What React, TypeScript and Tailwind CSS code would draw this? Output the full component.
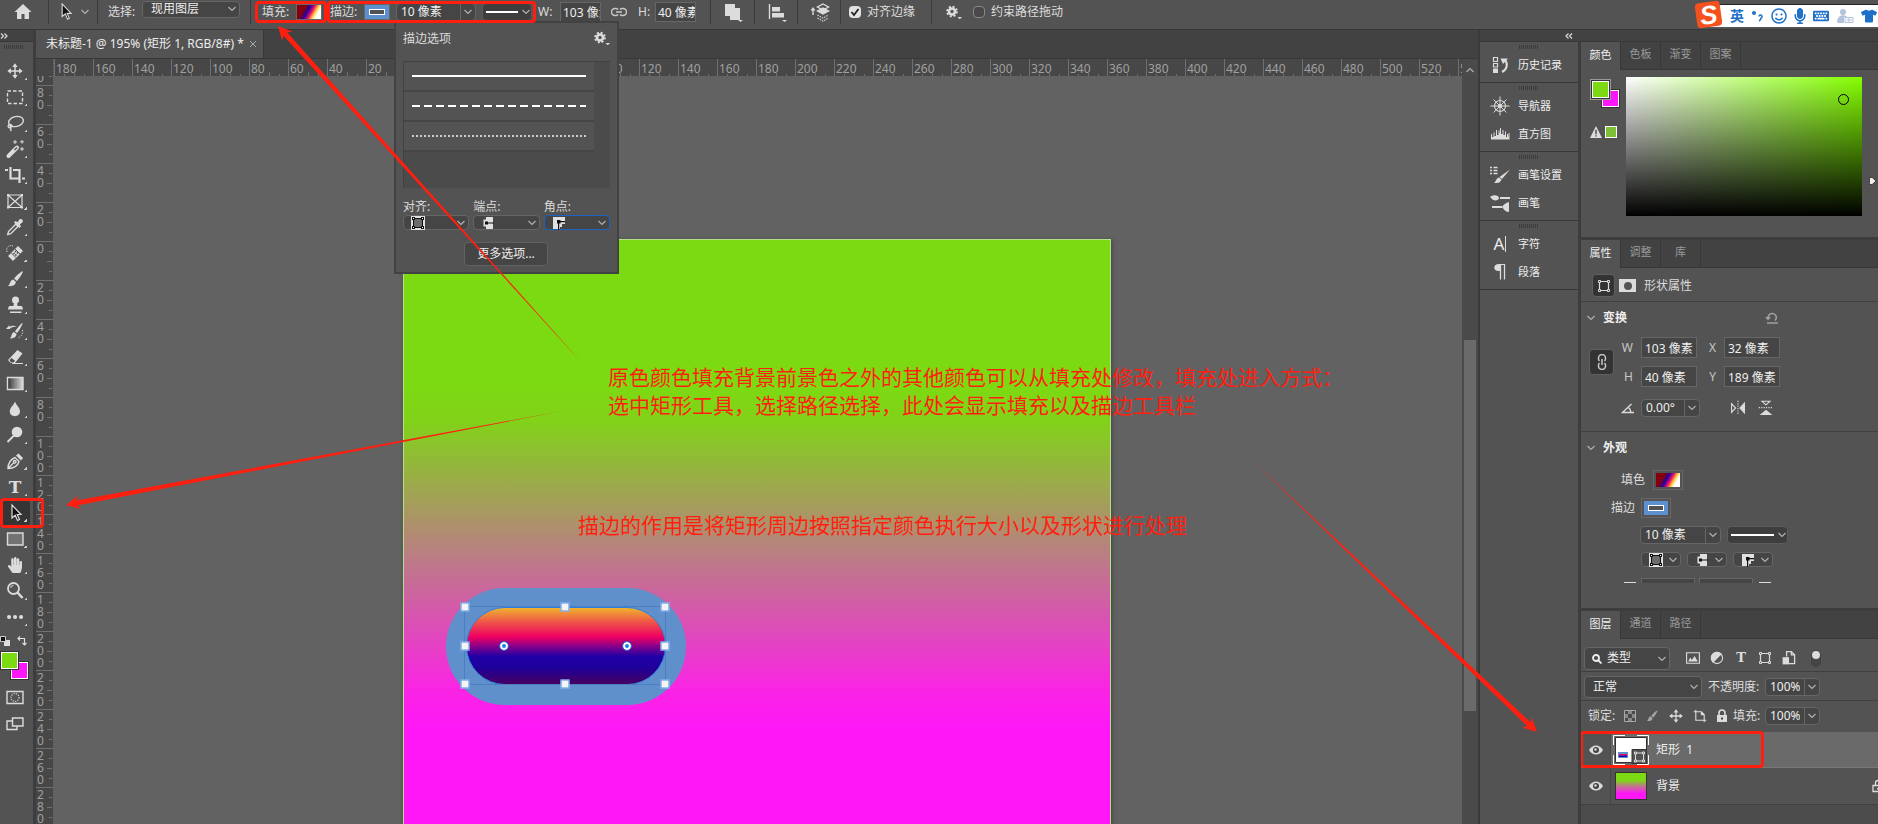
import { useState, type ReactNode } from "react"
import { FaHandPaper, FaKeyboard, FaMicrophone, FaTshirt, FaRegSmile } from "react-icons/fa"

const topMarks = Array.from({ length: 37 }, (_, i) => Math.abs(-180 + i * 20))
const sideMarks = Array.from({ length: 21 }, (_, i) => Math.abs(-100 + i * 20))

function Chevron({ className = "" }: { className?: string }) {
  return (
    <svg viewBox="0 0 8 6" className={`h-1.5 w-2 shrink-0 text-[#b0b0b0] ${className}`}>
      <path d="M0.5 1L4 4.5L7.5 1" fill="none" stroke="currentColor" strokeWidth="1.2" />
    </svg>
  )
}

function Icon({ size = "h-5 w-5", children }: { size?: string; children: ReactNode }) {
  return (
    <svg viewBox="0 0 20 20" className={`${size} shrink-0`} fill="none" stroke="#dcdcdc" strokeWidth="1.4">
      {children}
    </svg>
  )
}

function Gear() {
  return (
    <svg viewBox="0 0 16 16" className="h-4 w-4 shrink-0" fill="none" stroke="#dcdcdc">
      <circle cx="6" cy="7.500" r="3" strokeWidth="2.600" />
      <circle cx="6" cy="7.500" r="4.800" strokeWidth="2" strokeDasharray="2 1.770" />
      <path d="M11.500 13h4.500l-2.250 2.300z" fill="#dcdcdc" stroke="none" />
    </svg>
  )
}

function Grip() {
  return <div className="h-1 w-5 bg-[repeating-linear-gradient(90deg,#3c3c3c_0_1px,transparent_1px_2px)]" />
}

function GradientSwatch() {
  return (
    <span className="block h-3.5 w-6 bg-[linear-gradient(120deg,#84000f_30%,#1e00a0_44%,#f0106a_58%,#ffd23c_70%,#fff_80%)]" />
  )
}

function StrokeSwatch() {
  return (
    <span className="flex h-3.5 w-6 items-center justify-center bg-[#5d90ce]">
      <span className="h-1.5 w-4 border border-white bg-[#535353]" />
    </span>
  )
}

function TransformIcon({ size = "h-4 w-4" }: { size?: string }) {
  return (
    <svg viewBox="0 0 16 16" className={`${size} shrink-0`} fill="none" stroke="#dcdcdc">
      <path d="M5 3.500h6M5 12.500h6M3.500 5v6M12.500 5v6" strokeWidth="1.200" />
      <path d="M2.500 2.500h2v2h-2zM11.500 2.500h2v2h-2zM2.500 11.500h2v2h-2zM11.500 11.500h2v2h-2z" />
    </svg>
  )
}

function MoveIcon({ size = "h-5 w-5" }: { size?: string }) {
  return (
    <Icon size={size}>
      <path d="M10 4v12M4 10h12" strokeWidth="1.6" />
      <path d="M10 1.5l3 4H7zM10 18.5l3-4H7zM1.5 10l4-3v6zM18.5 10l-4-3v6z" fill="#dcdcdc" stroke="none" />
    </Icon>
  )
}

function BrushIcon({ size = "h-5 w-5" }: { size?: string }) {
  return (
    <Icon size={size}>
      <path d="M17.8 2.2c.8.5-4.4 8.6-6 9.8L9 9.6C10.200 7.800 16.600 1.600 17.800 2.200z" fill="#dcdcdc" stroke="none" />
      <path d="M8.200 10.400l2.600 2.300c.1 3-3 5-8 4.300 2.600-1 1.600-5.800 5.400-6.600z" fill="#dcdcdc" stroke="none" />
    </Icon>
  )
}

function AlignGlyph() {
  return (
    <svg viewBox="0 0 14 14" className="h-3.5 w-3.5">
      <path d="M0 0h14v14H0z" fill="#e0e0e0" />
      <path d="M2.500 2.500h9v9h-9z" fill="#6b6b6b" stroke="#111" />
      <path d="M1 1h3v3H1zM10 1h3v3h-3zM1 10h3v3H1zM10 10h3v3h-3z" fill="#111" />
      <path d="M2 2h1v1H2zM11 2h1v1h-1zM2 11h1v1H2zM11 11h1v1h-1z" fill="#fff" />
    </svg>
  )
}

function CapGlyph() {
  return (
    <svg viewBox="0 0 14 14" className="h-3.5 w-3.5">
      <path d="M5 1h7v12H5v-2.500H2.500v-7H5z" fill="#e0e0e0" />
      <path d="M4 5.500h3v3H4zM7 6.500h6v1H7z" fill="#111" />
    </svg>
  )
}

function CornerGlyph() {
  return (
    <svg viewBox="0 0 14 14" className="h-3.5 w-3.5">
      <path d="M1 1h12v7h-3v3H8v2H1z" fill="#e0e0e0" />
      <path d="M5 4h3.500v3.500H5zM8 5h5v1.200H8zM6 7h1.200v7H6z" fill="#111" />
    </svg>
  )
}

function IconSelect({ id, className, focus, children }: { id: string; className: string; focus?: boolean; children: ReactNode }) {
  return (
    <div className={`relative ${className}`}>
      <select
        id={id}
        aria-label={id}
        className={`block h-[15px] w-full appearance-none rounded-sm border bg-[#454545] ${focus ? "border-[#1b62c4]" : "border-[#666]"}`}
      >
        <option value="default" aria-label={id} />
      </select>
      <span className="pointer-events-none absolute inset-y-0 left-2 flex items-center">{children}</span>
      <Chevron className="pointer-events-none absolute top-[5px] right-1" />
    </div>
  )
}

function Combo({ id, value, width }: { id: string; value: string; width: string }) {
  return (
    <div className={`flex h-[18px] rounded-sm border border-[#666] bg-[#454545] ${width}`}>
      <input id={id} aria-label={id} defaultValue={value} className="w-full min-w-0 px-1 text-[12px] leading-4 text-[#eee] outline-none" />
      <button aria-label={`${id} 菜单`} className="flex w-[15px] shrink-0 items-center justify-center border-l border-[#666]">
        <Chevron />
      </button>
    </div>
  )
}

function LineSelect({ id, className }: { id: string; className: string }) {
  return (
    <div className={`relative ${className}`}>
      <select id={id} aria-label={id} className="block h-[18px] w-full appearance-none rounded-sm border border-[#5c5c5c] bg-[#3e3e3e]">
        <option value="solid" aria-label="实线" />
      </select>
      <span className="pointer-events-none absolute inset-0 flex items-center pr-0.5 pl-1">
        <span className="h-0.5 flex-1 bg-white" />
        <Chevron className="ml-1" />
      </span>
    </div>
  )
}

function RedBox({ className = "inset-0" }: { className?: string }) {
  return <span className={`pointer-events-none absolute z-20 rounded-sm border-3 border-[#ff1f10] ${className}`} />
}

function LinkIcon({ className = "" }: { className?: string }) {
  return (
    <svg viewBox="0 0 16 10" className={`h-2.5 w-4 shrink-0 ${className}`} fill="none" stroke="#c8c8c8" strokeWidth="1.5">
      <path d="M7 2.500A3 3 0 0 0 4.500 1.500h-.5a3.500 3.500 0 0 0 0 7h.5A3 3 0 0 0 7 7.500M9 2.500a3 3 0 0 1 2.500-1h.5a3.500 3.500 0 0 1 0 7h-.5A3 3 0 0 1 9 7.500M5 5h6" />
    </svg>
  )
}

const tools: { name: string; icon: ReactNode }[] = [
  { name: "移动", icon: <MoveIcon size="h-[18px] w-[18px]" /> },
  { name: "矩形选框", icon: <Icon><path d="M2.500 4h15v12.500h-15z" strokeDasharray="3.500 2" /></Icon> },
  {
    name: "套索",
    icon: (
      <Icon>
        <ellipse cx="11" cy="8.500" rx="7.500" ry="5" transform="rotate(-12 11 8.500)" />
        <path d="M5 11.500c-3 .5-2 4 .5 3s1.500-3-.5-3c0 3 2 4 .5 6.500" />
      </Icon>
    ),
  },
  {
    name: "魔棒",
    icon: (
      <Icon>
        <path d="M3.500 17L12 8.500" strokeWidth="4" strokeLinecap="round" />
        <path d="M9.500 11l2.500-2.500" stroke="#535353" strokeWidth="1.500" />
        <path d="M10 1v4M8 3h4M17 1v3.600M15.200 2.800h3.600M17 8v4M15 10h4" strokeWidth="1" />
      </Icon>
    ),
  },
  { name: "裁剪", icon: <Icon><path d="M5.500 2v11.500H15M0 5h3M8 5h6.500v10.500M14.500 14v4M17 13.500h3" strokeWidth="2.200" /></Icon> },
  { name: "图框", icon: <Icon><path d="M3 4h14v12.500H3zM3 4l14 12.500M17 4L3 16.500" strokeWidth="1.200" /><path d="M2 3h2v2H2zM16 3h2v2h-2zM2 15.500h2v2H2zM16 15.500h2v2h-2z" fill="#dcdcdc" stroke="none" /></Icon> },
  {
    name: "吸管",
    icon: (
      <Icon>
        <path d="M11 7L3.500 14.500l-.8 3 3-.8L13 9.500z" />
        <path d="M9 5.500l1.500-1.500 2 1.200 2-2.600c1.500-1.600 4.500.8 3 2.700L14.800 7.500l1.200 2-1.500 1.500z" fill="#dcdcdc" stroke="none" />
      </Icon>
    ),
  },
  {
    name: "修复",
    icon: (
      <Icon>
        <path d="M5.500 15.500L15.500 5.500" strokeWidth="7" />
        <path d="M6.200 9.800l5 5M10 6l5 5" stroke="#535353" strokeWidth="1" />
        <path d="M10.500 8.500h.1M12.500 10h.1M9 10.500h.1M10.800 12h.1" stroke="#444" strokeWidth="1.400" strokeLinecap="square" />
        <path d="M2 9c-1.500-5 3-8 7-5.500" strokeDasharray="1.200 1.200" strokeWidth="1" />
      </Icon>
    ),
  },
  { name: "画笔", icon: <BrushIcon /> },
  {
    name: "图章",
    icon: (
      <Icon>
        <circle cx="10.500" cy="5" r="3.500" fill="#dcdcdc" stroke="none" />
        <path d="M9 7h3l.5 4h4c1 0 1.500 3.500 1.500 3.500H3S3.500 11 4.500 11h4zM5 16.500h11.500V18H5z" fill="#dcdcdc" stroke="none" />
      </Icon>
    ),
  },
  {
    name: "历史画笔",
    icon: (
      <Icon>
        <path d="M17.500 2c.8.500-4 9-5.500 10L10 10.500C11 9 16.500 1.500 17.500 2zM9 11l2.500 2c0 3-3 4.500-6.500 4.500 2-1.500 1-5.500 4-6.500zM1 8l3.500-4v2c2-1.500 5-1.500 7-.5-2 .3-5 .5-7 2.500z" fill="#dcdcdc" stroke="none" />
        <path d="M17.500 9c1 4-2 7.500-5 8" strokeWidth="1" strokeDasharray="1.200 1.500" />
      </Icon>
    ),
  },
  {
    name: "橡皮擦",
    icon: (
      <Icon>
        <path d="M12.500 3l5 3.500-7.500 9.500H5.500L3 13z" fill="#dcdcdc" stroke="none" />
        <path d="M6.800 10.800l4 3M7 16.500h11" stroke="#dcdcdc" strokeWidth="1.200" />
        <path d="M6.500 11l3.500 2.700-1.500 1.800H6L4.500 13z" fill="#535353" stroke="none" />
      </Icon>
    ),
  },
  {
    name: "渐变",
    icon: (
      <Icon>
        <defs>
          <linearGradient id="tool-gradient"><stop stopColor="#333" /><stop offset="1" stopColor="#ddd" /></linearGradient>
        </defs>
        <path d="M2.500 4.500h15.500v12H2.500z" fill="url(#tool-gradient)" />
      </Icon>
    ),
  },
  { name: "模糊", icon: <Icon><path d="M10 2.500c1 3.500 5 6 5 9.800 0 6.500-10.200 6.500-10.200 0C4.800 8.500 9 6 10 2.500z" fill="#dcdcdc" stroke="none" /></Icon> },
  { name: "减淡", icon: <Icon><circle cx="12" cy="7" r="5.300" fill="#dcdcdc" stroke="none" /><path d="M9 10.500L2.500 17" strokeWidth="1.800" /></Icon> },
  {
    name: "钢笔",
    icon: (
      <Icon>
        <path d="M3 17.500c0-5 1.500-8.500 7-11l4 4c-1.500 5-5.500 7-11 7zl6-6" />
        <circle cx="9.700" cy="10.800" r="1.300" />
        <path d="M11 4.500l2.500-2 4.500 4.500-2 2.500z" fill="#dcdcdc" stroke="none" />
      </Icon>
    ),
  },
  { name: "文字", icon: <span className="font-['DejaVu_Serif',serif] text-[17px] leading-5 font-bold">T</span> },
  { name: "路径选择", icon: <Icon><path d="M7 2v13l3.200-2.800 2.300 5.300 2-1-2.300-5H16z" fill="#111" strokeWidth="1.200" /></Icon> },
  { name: "矩形", icon: <Icon><path d="M2.500 4h15.500v12H2.500z" fill="#727272" /></Icon> },
  { name: "抓手", icon: <FaHandPaper className="h-4 w-4" /> },
  { name: "缩放", icon: <Icon><circle cx="8.500" cy="7.500" r="5.500" strokeWidth="1.800" /><path d="M5.500 7a3 3 0 0 1 3-2.500" strokeWidth="1" /><path d="M12.500 11.500l5 5.500" strokeWidth="2.500" /></Icon> },
  { name: "更多", icon: <Icon><path d="M4 10h.1M10 10h.1M16 10h.1" strokeWidth="4" strokeLinecap="round" /></Icon> },
]

function Toolbar() {
  const [active, setActive] = useState("路径选择")

  return (
    <aside className="flex w-9 shrink-0 flex-col border-r-3 border-[#3d3d3d] bg-[#535353]">
      <div className="flex h-3 items-center border-b border-[#383838] bg-[#424242]">
        <svg viewBox="0 0 8 6" className="h-1.5 w-2" fill="none" stroke="#ddd" strokeWidth="1.2">
          <path d="M1 .5L3.500 3L1 5.500M4.500 .5L7 3L4.500 5.500" />
        </svg>
      </div>
      <div className="flex h-4 justify-start pt-[3px] pl-1"><Grip /></div>
      {tools.map((t) => (
        <div key={t.name} className="relative h-[26px]">
          <button
            aria-label={t.name}
            onClick={() => setActive(t.name)}
            className={`flex h-[26px] w-[30px] items-center justify-center rounded-sm text-[#dcdcdc] ${active === t.name ? "bg-[#353535]" : ""}`}
          >
            {t.icon}
          </button>
          <span className="absolute right-1.5 bottom-1 h-[3px] w-[3px] bg-[linear-gradient(135deg,transparent_50%,#ccc_50%)]" />
          {active === t.name && <RedBox className="-top-0.5 -bottom-0.5 left-0 w-11" />}
        </div>
      ))}
      <div className="flex h-[21px] items-center justify-between pr-1.5">
        <svg viewBox="0 0 10 10" className="h-2.5 w-2.5"><path d="M4 4h6v6H4z" fill="#ddd" /><path d="M.5.5h5v5h-5z" fill="#111" stroke="#ccc" /></svg>
        <svg viewBox="0 0 10 10" className="h-2.5 w-2.5" fill="none" stroke="#ddd" strokeWidth="1.2"><path d="M3 .5L1 2.500L3 4.500M1 2.500h6.500V9M5.500 7l2 2 2-2" /></svg>
      </div>
      <div className="relative h-[30px]">
        <span className="absolute top-2.5 left-2.5 h-[19px] w-[19px] border border-[#333] bg-white p-px"><span className="block h-full bg-[#ff17fb]" /></span>
        <span className="absolute top-0 left-0 h-[19px] w-[19px] border border-[#333] bg-white p-px"><span className="block h-full bg-[#7cda12]" /></span>
      </div>
      <div className="flex h-8 w-[30px] items-center justify-center">
        <Icon><path d="M2 4.500h16v12H2z" /><circle cx="10" cy="10.500" r="4" strokeDasharray="1.200 1.200" strokeWidth="1.200" /></Icon>
      </div>
      <div className="relative flex h-5 w-[30px] items-center justify-center">
        <Icon><path d="M2 8h10v8.500H2z" /><path d="M7.500 5h10.500v8H7.500z" fill="#535353" /></Icon>
      </div>
    </aside>
  )
}

function OptionsBar() {
  return (
    <header className="relative flex h-[30px] shrink-0 items-start overflow-hidden border-b border-[#383838] bg-[#535353] text-[12px]">
      <button aria-label="主页" className="flex h-6 w-[49px] shrink-0 items-center justify-center border-r border-[#3c3c3c] pr-0.5">
        <svg viewBox="0 0 18 16" className="h-4 w-[18px]" fill="#dcdcdc"><path d="M9 0l8.500 8H15v7h-4.500v-5h-3v5H3V8H.5z" /></svg>
      </button>
      <button aria-label="路径选择工具" className="flex h-6 w-[49px] shrink-0 items-center gap-1 border-r border-[#3c3c3c] pl-2.5">
        <Icon size="h-[18px] w-[18px]"><path d="M3.500 1v14l3.500-3 2.500 6 2-1-2.500-5.500h4.500z" fill="#111" strokeWidth="1.200" /></Icon>
        <Chevron />
      </button>
      <div className="flex h-6 w-[153px] shrink-0 items-center gap-1 border-r border-[#3c3c3c] pl-2.5">
        <label htmlFor="pick" className="w-[30px] whitespace-nowrap">选择:</label>
        <div className="relative mb-1.5">
          <select id="pick" className="h-[17px] w-[98px] appearance-none rounded-sm border border-[#666] bg-[#454545] pl-2 text-[12px] leading-[14px] text-[#eee]">
            <option>现用图层</option>
          </select>
          <Chevron className="pointer-events-none absolute top-1.5 right-1" />
        </div>
      </div>
      <div className="relative mt-px ml-1 flex h-[22px] w-[72px] shrink-0 items-center gap-1.5 pl-[7px]">
        <span className="w-7 whitespace-nowrap">填充:</span>
        <button aria-label="填充" className="border border-[#666]"><GradientSwatch /></button>
        <RedBox />
      </div>
      <div className="relative mt-px flex h-[22px] w-[209px] shrink-0 items-center gap-1.5 pl-[3px]">
        <span className="w-7 whitespace-nowrap">描边:</span>
        <button aria-label="描边" className="border border-[#666]"><StrokeSwatch /></button>
        <Combo id="描边宽度" value="10 像素" width="w-20" />
        <LineSelect id="描边类型" className="w-[50px]" />
        <RedBox />
      </div>
      <div className="flex h-6 shrink-0 items-center">
        <label htmlFor="bar-w" className="w-6 pl-0.5">W:</label>
        <input id="bar-w" defaultValue="103 像素" className="h-5 w-[41px] border border-[#666] bg-[#454545] pl-0.5 text-[#eee]" />
        <LinkIcon className="ml-2.5" />
        <label htmlFor="bar-h" className="w-7 pl-[11px]">H:</label>
        <input id="bar-h" defaultValue="40 像素" className="h-5 w-[41px] border border-[#666] bg-[#454545] pl-0.5 text-[#eee]" />
      </div>
      <div className="ml-3.5 flex h-6 shrink-0 items-center border-l border-[#3c3c3c] pl-3">
        <button aria-label="路径操作" className="flex w-[31px] items-center">
          <Icon><path d="M2 2h10v4h5v12H7v-4H2z" fill="#dcdcdc" stroke="none" /><path d="M15 18h5l-2.500 2z" fill="#dcdcdc" stroke="none" /></Icon>
        </button>
        <button aria-label="路径对齐方式" className="flex h-6 w-[43px] items-center border-l border-[#3c3c3c] pl-3">
          <Icon><path d="M2.500 2v15" /><path d="M5 5h8v4.500H5zM5 11h12v4.500H5z" fill="#dcdcdc" stroke="none" /><path d="M15 18h5l-2.500 2z" fill="#dcdcdc" stroke="none" /></Icon>
        </button>
        <button aria-label="路径排列方式" className="flex h-6 w-[43px] items-center border-l border-[#3c3c3c] pl-3">
          <Icon>
            <path d="M3 13V7" /><path d="M3 5l2.500 3.500h-5z" fill="#dcdcdc" stroke="none" />
            <path d="M13 2l5.500 3L13 8 7.500 5z" />
            <path d="M13 6l5.500 3-5.500 3-5.500-3z" fill="#dcdcdc" />
            <path d="M7.500 13l5.500 3 5.500-3M7.500 16l5.500 3 5.500-3" strokeWidth="1.100" strokeDasharray="1.500 1" />
          </Icon>
        </button>
        <label className="flex h-6 w-[91px] items-center gap-1.5 border-l border-[#3c3c3c] pl-2">
          <span className="relative h-3 w-3">
            <input type="checkbox" defaultChecked className="peer block h-3 w-3 appearance-none rounded-sm bg-[#e2e2e2]" />
            <svg viewBox="0 0 12 12" className="pointer-events-none absolute inset-0 hidden peer-checked:block"><path d="M2.500 6l2.500 3 4.500-6" fill="none" stroke="#222" strokeWidth="1.800" /></svg>
          </span>
          对齐边缘
        </label>
        <button aria-label="设置" className="flex h-6 w-[42px] items-center border-l border-[#3c3c3c] pl-3.5"><Gear /></button>
        <label className="flex items-center gap-1.5 whitespace-nowrap">
          <input type="checkbox" className="h-3 w-3 appearance-none rounded-sm border border-[#888] bg-[#494949]" />
          约束路径拖动
        </label>
      </div>
      <ImeBar />
    </header>
  )
}

function ImeBar() {
  return (
    <div className="absolute top-1 right-0 flex h-[23px] w-[168px] items-center justify-between border-t border-[#222] bg-white pr-px pl-5 text-[#1f70c8]">
      <span className="absolute -top-[3px] -left-3.5 flex h-[25px] w-[25px] -rotate-8 items-center justify-center rounded-sm bg-[#f4511e] font-['Liberation_Sans',sans-serif] text-[26px] leading-6 font-bold text-white italic">
        S
      </span>
      <span className="text-[14px] leading-5 font-bold">英</span>
      <svg viewBox="0 0 12 12" className="h-3 w-3"><circle cx="3" cy="3" r="2" fill="currentColor" /><path d="M8 6.500a1.500 1.500 0 1 1 2 1.500q0 2-2 3" fill="none" stroke="currentColor" strokeWidth="1.500" /></svg>
      <FaRegSmile className="h-4 w-4" />
      <FaMicrophone className="h-4 w-3" />
      <FaKeyboard className="h-4 w-4" />
      <svg viewBox="0 0 17 16" className="h-4 w-[17px]" fill="#b3c3dc"><circle cx="6" cy="4" r="3" /><path d="M0 14c0-8 9-8 10-5H7v6H1z" /><path d="M8 9.500h8v5H8zM12 9.500v5M9.500 12H15" fill="#fff" stroke="#b3c3dc" /></svg>
      <FaTshirt className="h-4 w-4" />
    </div>
  )
}

function StrokeOptions() {
  return (
    <div className="absolute top-[21px] left-[394px] z-10 h-[253px] w-[225px] border-2 border-[#424242] bg-[#535353] px-[7px] text-[12px]">
      <div className="flex h-[38px] items-start justify-between pt-[7px]">
        <h2>描边选项</h2>
        <button aria-label="描边选项菜单"><Gear /></button>
      </div>
      <div className="h-[127px] border-t border-l border-[#424242] bg-[#4b4b4b] pr-4">
        <button aria-label="实线" className="flex h-[30px] w-full items-center border-b-2 border-[#454545] bg-[#535353] px-2">
          <span className="h-0.5 w-full bg-white" />
        </button>
        <button aria-label="虚线" className="flex h-[30px] w-full items-center border-b-2 border-[#454545] bg-[#535353] px-2">
          <span className="h-0.5 w-full bg-[repeating-linear-gradient(90deg,#fff_0_8px,transparent_8px_12px)]" />
        </button>
        <button aria-label="点线" className="flex h-[30px] w-full items-center border-b-2 border-[#454545] bg-[#535353] px-2">
          <span className="h-0.5 w-full bg-[repeating-linear-gradient(90deg,#ccc_0_2px,transparent_2px_4px)]" />
        </button>
      </div>
      <div className="mt-2.5 grid grid-cols-3 gap-x-1 leading-[17px]">
        <label htmlFor="对齐">对齐:</label>
        <label htmlFor="端点">端点:</label>
        <label htmlFor="角点">角点:</label>
        <IconSelect id="对齐" className="w-full"><AlignGlyph /></IconSelect>
        <IconSelect id="端点" className="w-full"><CapGlyph /></IconSelect>
        <IconSelect id="角点" className="w-full" focus><CornerGlyph /></IconSelect>
      </div>
      <button className="mt-3 ml-[61px] block h-6 w-[84px] rounded-sm border border-[#626262] bg-[#454545] leading-5 text-[#eee]">更多选项...</button>
    </div>
  )
}

function Handle({ className }: { className: string }) {
  return <span className={`absolute h-[9px] w-[9px] -translate-x-1/2 -translate-y-1/2 border border-[#4d8ce6] bg-[#f4f4f4] ${className}`} />
}

function Canvas() {
  return (
    <div className="relative flex-1 overflow-hidden bg-[#626262]">
      <div className="absolute top-[163px] left-[350px] h-[1000px] w-[708px] border border-[#b5e08a] bg-[linear-gradient(to_bottom,#7cda12_0,#7cda12_145px,#81d219_181px,#bd7a88_321px,#fa24e4_450px,#ff17f8_490px)] shadow-[1px_1px_4px_#444]">
        <div className="absolute top-[348px] left-[42px] h-[117px] w-60 rounded-full bg-[#5f90cc]">
          <div className="absolute inset-x-5 top-[19px] bottom-5 rounded-full border border-[#2d7fe0] bg-[linear-gradient(to_bottom,#f0b22f,#ee4e4a_20%,#f00062_38%,#8a0089_50%,#1f00a6_64%,#1e009c_78%,#440060)]" />
          <div className="absolute top-[18px] right-5 bottom-5 left-[18px] border border-[#4b7fc0]">
            <Handle className="top-0 left-0" />
            <Handle className="top-0 left-1/2" />
            <Handle className="top-0 left-full" />
            <Handle className="top-1/2 left-0" />
            <Handle className="top-1/2 left-full" />
            <Handle className="top-full left-0" />
            <Handle className="top-full left-1/2" />
            <Handle className="top-full left-full" />
            <span className="absolute top-[35px] left-[35px] h-2 w-2 rounded-full border-2 border-white bg-[#1f7fe8] outline outline-[#1f6fd0]" />
            <span className="absolute top-[35px] right-[34px] h-2 w-2 rounded-full border-2 border-white bg-[#1f7fe8] outline outline-[#1f6fd0]" />
          </div>
        </div>
      </div>
    </div>
  )
}

function Workspace() {
  return (
    <main className="flex min-w-0 flex-1 flex-col">
      <div className="flex h-[29px] shrink-0 border-b border-[#383838] bg-[#424242] text-[12px]">
        <div className="flex w-[228px] items-center gap-1.5 border-r border-[#383838] bg-[#535353] pl-2.5 text-[#eee]">
          <span className="whitespace-nowrap">未标题-1 @ 195% (矩形 1, RGB/8#) *</span>
          <button aria-label="关闭" className="text-[#aaa]">
            <svg viewBox="0 0 6 6" className="h-1.5 w-1.5"><path d="M0 0l6 6M6 0L0 6" stroke="currentColor" /></svg>
          </button>
        </div>
      </div>
      <div className="flex min-h-0 flex-1">
        <div className="flex min-w-0 flex-1 flex-col">
          <div className="flex h-[17px] shrink-0 overflow-hidden bg-[#474747] text-[12px] leading-5 text-[#a0a0a0]">
            <div className="w-[18px] shrink-0 border-r border-dotted border-[#707070]" />
            {topMarks.map((m, i) => (
              <div key={i} className="relative w-[39px] shrink-0 border-l border-[#707070] pl-px">
                {m}
                <span className="absolute top-[15px] left-[9px] h-0.5 w-px bg-[#707070]" />
                <span className="absolute top-[13px] left-[19px] h-1 w-px bg-[#707070]" />
                <span className="absolute top-[15px] left-[29px] h-0.5 w-px bg-[#707070]" />
              </div>
            ))}
          </div>
          <div className="flex min-h-0 flex-1">
            <div className="w-[17px] shrink-0 overflow-hidden bg-[#474747] text-[12px] text-[#a0a0a0]">
              <div className="-mt-[30px]">
                {sideMarks.map((m, i) => (
                  <div key={i} className="relative flex h-[39px] flex-col border-t border-[#707070] pt-px pl-px leading-3">
                    {String(m).split("").map((d, j) => (
                      <span key={j}>{d}</span>
                    ))}
                    <span className="absolute top-[9px] right-px h-px w-[3px] bg-[#707070]" />
                    <span className="absolute top-[19px] right-px h-px w-[5px] bg-[#707070]" />
                    <span className="absolute top-[29px] right-px h-px w-[3px] bg-[#707070]" />
                  </div>
                ))}
              </div>
            </div>
            <Canvas />
          </div>
        </div>
        <div className="w-4 shrink-0 bg-[#4a4a4a] px-0.5">
          <Chevron className="mx-auto mt-2 rotate-180" />
          <div className="mt-[267px] h-[371px] bg-[#6a6a6a]" />
        </div>
      </div>
    </main>
  )
}

function DockItem({ label, children }: { label: string; children: ReactNode }) {
  return (
    <button className="flex h-7 w-full items-center gap-2 pl-2.5 text-[11px] text-[#eee]">
      {children}
      {label}
    </button>
  )
}

function DockGroup({ children }: { children: ReactNode }) {
  return (
    <div className="border-b border-[#383838] pb-[3px]">
      <div className="flex h-[9px] items-center justify-center pt-px"><Grip /></div>
      {children}
    </div>
  )
}

function Dock() {
  return (
    <nav className="w-[101px] shrink-0 border-r-3 border-[#3d3d3d] bg-[#535353]">
      <DockGroup>
        <DockItem label="历史记录">
          <Icon><path d="M3.500 2.500h4v4h-4zM3.500 8.500h4v3.500h-4z" strokeWidth="1.200" /><path d="M3 13.500h5v4.500H3zM10.500 3.500h7.500L13 9z" fill="#dcdcdc" stroke="none" /><path d="M15 5c3 3.500 2.500 9-3 12" strokeWidth="2" /></Icon>
        </DockItem>
      </DockGroup>
      <DockGroup>
        <DockItem label="导航器">
          <Icon><circle cx="10" cy="10" r="5.500" strokeWidth="1.100" /><circle cx="10" cy="10" r="1.500" strokeWidth="1" /><path d="M10 .5v19M.5 10h19M3.500 3.500l13 13M16.500 3.500l-13 13" strokeWidth="1" /></Icon>
        </DockItem>
        <DockItem label="直方图">
          <Icon><path d="M1 15.500V10h1v3h1.500V8.500h1V12H6V6h1v5h1.500V6.500h1V9h.5V4h1v6h1.500V6h1v5H15V7.500h1V13h1V10h1v2.500h.5V9h1v6.500z" fill="#dcdcdc" stroke="none" /></Icon>
        </DockItem>
      </DockGroup>
      <DockGroup>
        <DockItem label="画笔设置">
          <Icon><path d="M0 2.500h2M3.500 2.500h4M0 5.500h2M3.500 5.500h4M0 8.500h2M3.500 8.500h4" /><path d="M20 4.500L12 14l-2.500-2zM9 12.500l2.500 2c-1 3-3 3.500-7.500 3.500 2-1 2-5 5-5.500z" fill="#dcdcdc" stroke="none" /></Icon>
        </DockItem>
        <DockItem label="画笔">
          <Icon><path d="M10 5h10M2 14h10" strokeWidth="2" /><path d="M0 4c3-3 9-2 9 1s-6 3-7 1zM12 14c2-3 4-4 7-5v10c-3 0-5-2-7-5z" fill="#dcdcdc" stroke="none" /></Icon>
        </DockItem>
      </DockGroup>
      <DockGroup>
        <DockItem label="字符">
          <span className="flex h-5 w-5 items-center justify-center gap-px text-[17px] leading-5">A<span className="h-4 w-px bg-[#dcdcdc]" /></span>
        </DockItem>
        <DockItem label="段落">
          <Icon><path d="M10 2.500v6.500C2.500 10 2.500 2 9 2h6v1H10z" fill="#dcdcdc" stroke="none" /><path d="M10.500 2.500v15M14.500 2.500v15" strokeWidth="1.300" /></Icon>
        </DockItem>
      </DockGroup>
    </nav>
  )
}

function PanelTabs({ tabs }: { tabs: string[] }) {
  const [current, setCurrent] = useState(tabs[0])

  return (
    <div role="tablist" className="flex h-7 shrink-0 bg-[#424242] text-[11px]">
      {tabs.map((t) => (
        <button
          key={t}
          role="tab"
          aria-selected={t === current}
          onClick={() => setCurrent(t)}
          className={`w-10 border-r border-[#383838] pb-0.5 ${t === current ? "bg-[#535353] text-[#eee]" : "border-b text-[#9a9a9a]"}`}
        >
          {t}
        </button>
      ))}
      <span className="flex-1 border-b border-[#383838]" />
    </div>
  )
}

function ColorPanel() {
  return (
    <section className="border-b-3 border-[#3d3d3d]">
      <PanelTabs tabs={["颜色", "色板", "渐变", "图案"]} />
      <div className="flex h-[167px] gap-[7px] pt-[7px] pl-[9px]">
        <div className="w-[29px] shrink-0">
          <div className="relative mt-0.5 h-[47px]">
            <span className="absolute top-2.5 left-[11px] h-[19px] w-[19px] border border-[#333] bg-white p-px"><span className="block h-full bg-[#ff17fb]" /></span>
            <span className="absolute top-0 left-0 h-[21px] w-[21px] border border-[#999] bg-[#333] p-px"><span className="block h-full border border-white bg-[#7cda12]" /></span>
          </div>
          <div className="flex items-center gap-[3px]">
            <svg viewBox="0 0 13 13" className="h-3 w-3"><path d="M6.500 0L13 13H0z" fill="#dcdcdc" /><path d="M6.500 4v5M6.500 10v1.500" stroke="#444" strokeWidth="1.500" /></svg>
            <span className="h-3 w-3 border border-white bg-[#7fbf35]" />
          </div>
        </div>
        <div className="relative h-[139px] flex-1 bg-[linear-gradient(to_top,#000,transparent),linear-gradient(to_right,#fff,#84ff00)]">
          <span className="absolute top-[17px] right-[13px] h-[11px] w-[11px] rounded-full border border-black" />
        </div>
        <svg viewBox="0 0 9 9" className="mt-[100px] mr-px h-2 w-2 shrink-0"><path d="M.5.5h3L8 4.500L3.500 8.500h-3z" fill="#eee" stroke="#333" /></svg>
      </div>
    </section>
  )
}

function Field({ label, id, value }: { label: string; id: string; value: string }) {
  return (
    <div className="flex items-center">
      <label htmlFor={id} className="w-[27px] pr-2 text-right text-[#c8c8c8]">{label}</label>
      <input id={id} defaultValue={value} className="h-[21px] w-14 border border-[#666] bg-[#454545] px-[3px] text-[#eee]" />
    </div>
  )
}

function PropertiesPanel() {
  return (
    <section className="border-b-3 border-[#3d3d3d] text-[12px]">
      <PanelTabs tabs={["属性", "调整", "库"]} />
      <div className="flex h-[34px] items-center border-b border-[#404040] pt-0.5 pl-[11px]">
        <button aria-label="形状" className="flex h-[23px] w-[23px] items-center justify-center rounded-sm border border-[#5f5f5f] bg-[#333]"><TransformIcon /></button>
        <span className="ml-1 flex h-[13px] w-[17px] items-center justify-center bg-[#dcdcdc]"><span className="h-2 w-2 rounded-full bg-[#535353]" /></span>
        <span className="ml-2">形状属性</span>
      </div>
      <div className="h-[130px] border-b border-[#404040]">
        <div className="flex h-[35px] items-center pb-1 pl-1.5">
          <Chevron />
          <h3 className="ml-2 w-[162px] font-bold text-[#f0f0f0]">变换</h3>
          <button aria-label="重置">
            <svg viewBox="0 0 14 13" className="h-[13px] w-3.5" fill="none" stroke="#a0a0a0" strokeWidth="1.600"><path d="M3 6.500a4.200 4 0 1 1 7 3M2 12h11" /><path d="M0 6h6L3 9.500z" fill="#a0a0a0" stroke="none" /></svg>
          </button>
        </div>
        <div className="flex items-center pl-2">
          <button aria-label="链接宽高" className="flex h-[26px] w-[25px] items-center justify-center rounded-sm border border-[#5f5f5f] bg-[#333]"><LinkIcon className="rotate-90" /></button>
          <div className="grid grid-cols-2 gap-y-2">
            <Field label="W" id="prop-w" value="103 像素" />
            <Field label="X" id="prop-x" value="32 像素" />
            <Field label="H" id="prop-h" value="40 像素" />
            <Field label="Y" id="prop-y" value="189 像素" />
          </div>
        </div>
        <div className="mt-3 flex items-center pl-10">
          <svg viewBox="0 0 14 12" className="mr-1.5 h-3 w-3.5" fill="none" stroke="#dcdcdc" strokeWidth="1.300"><path d="M10.500 2L1.500 10.500H13M7 5.500c2 1 3 3 2.500 5" /></svg>
          <Combo id="角度" value="0.00°" width="w-[59px]" />
          <button aria-label="水平翻转" className="ml-[30px]">
            <Icon size="h-4 w-4"><path d="M2 4.500v11L7 10z" /><path d="M18 4v12l-5.500-6z" fill="#dcdcdc" /><path d="M10 1v18" strokeDasharray="1.500 1.500" /></Icon>
          </button>
          <button aria-label="垂直翻转" className="ml-3">
            <Icon size="h-4 w-4"><path d="M5 1.500h10L10 6z" /><path d="M4 18h12l-6-5z" fill="#dcdcdc" /><path d="M1 9.500h18" strokeDasharray="1.500 1.500" /></Icon>
          </button>
        </div>
      </div>
      <div className="h-[176px]">
        <div className="flex h-8 items-center pl-1.5">
          <Chevron />
          <h3 className="ml-2 font-bold text-[#f0f0f0]">外观</h3>
        </div>
        <div className="flex h-7 items-center pt-1 pl-10">
          <span className="w-8">填色</span>
          <button aria-label="填色" className="border border-[#666] p-0.5"><GradientSwatch /></button>
        </div>
        <div className="flex h-7 items-center pt-1 pl-[30px]">
          <span className="w-[30px]">描边</span>
          <button aria-label="描边颜色" className="border border-[#666] p-0.5"><StrokeSwatch /></button>
        </div>
        <div className="mt-1.5 flex gap-1.5 pl-[59px]">
          <Combo id="属性描边宽度" value="10 像素" width="w-[81px]" />
          <LineSelect id="属性描边类型" className="w-[61px]" />
        </div>
        <div className="mt-2 flex gap-1.5 pl-[60px]">
          <IconSelect id="对齐类型" className="w-10"><AlignGlyph /></IconSelect>
          <IconSelect id="端点类型" className="w-10"><CapGlyph /></IconSelect>
          <IconSelect id="角点类型" className="w-10"><CornerGlyph /></IconSelect>
        </div>
        <div className="mt-[11px] flex h-[5px] items-end gap-1 overflow-hidden pl-[43px]">
          <span className="mr-px h-px w-3 bg-[#dcdcdc]" />
          <span className="h-[5px] w-[54px] border border-b-0 border-[#666] bg-[#454545]" />
          <span className="h-[5px] w-[54px] border border-b-0 border-[#666] bg-[#454545]" />
          <span className="ml-0.5 h-px w-3 bg-[#dcdcdc]" />
        </div>
      </div>
    </section>
  )
}

function Eye() {
  return (
    <svg viewBox="0 0 14 10" className="h-2.5 w-3.5">
      <path d="M0 5c3.500-6 10.500-6 14 0-3.500 6-10.500 6-14 0z" fill="#dcdcdc" />
      <circle cx="7" cy="5" r="3" fill="#444" />
      <circle cx="6.500" cy="4.500" r="1.200" fill="#dcdcdc" />
    </svg>
  )
}

function LockIcon() {
  return (
    <svg viewBox="0 0 12 14" className="h-3.5 w-3 shrink-0">
      <path d="M3 6V4a3 3 0 0 1 6 0v2" fill="none" stroke="#dcdcdc" strokeWidth="1.600" />
      <path d="M1 6h10v7H1z" fill="#dcdcdc" />
      <path d="M5 8.500h2v2H5z" fill="#444" />
    </svg>
  )
}

function OutlineLockIcon() {
  return (
    <svg viewBox="0 0 12 14" className="h-3.5 w-3 shrink-0" fill="none" stroke="#dcdcdc" strokeWidth="1.300">
      <path d="M3.500 6V4a2.500 2.500 0 0 1 5 0v2M1 6.500h10v6H1z" />
      <path d="M5 9h2v1.500H5z" fill="#dcdcdc" stroke="none" />
    </svg>
  )
}

function LayersPanel() {
  return (
    <section className="flex min-h-0 flex-1 flex-col overflow-hidden bg-[#4c4c4c] text-[12px]">
      <PanelTabs tabs={["图层", "通道", "路径"]} />
      <div className="flex h-[33px] shrink-0 items-center border-b border-[#404040] bg-[#535353] pt-1.5 pl-[3px]">
        <div className="relative">
          <select aria-label="图层过滤" className="block h-[23px] w-[86px] appearance-none rounded-sm border border-[#666] bg-[#454545] pl-[22px] text-[#eee]">
            <option>类型</option>
          </select>
          <svg viewBox="0 0 10 10" className="pointer-events-none absolute top-[7px] left-2 h-2.5 w-2.5" fill="none" stroke="#eee" strokeWidth="1.800"><circle cx="4" cy="4" r="3" /><path d="M6 6l3.500 3.500" /></svg>
          <Chevron className="pointer-events-none absolute top-[9px] right-1" />
        </div>
        <div className="ml-[15px] flex items-center gap-2">
          <Icon size="h-4 w-4"><path d="M2 3.500h16v13H2z" /><path d="M4 14.500l2.500-5 2 3 3.500-5 4 7z" fill="#dcdcdc" stroke="none" /></Icon>
          <Icon size="h-4 w-4"><circle cx="10" cy="10" r="7" /><path d="M5 15L15 5a7 7 0 0 0-10 10z" fill="#dcdcdc" /></Icon>
          <span className="w-4 text-center font-['DejaVu_Serif',serif] text-[13px] leading-4 font-bold">T</span>
          <TransformIcon />
          <Icon size="h-4 w-4"><path d="M7 8V2h6l4 4v11h-7M13 2v4h4" strokeWidth="1.600" /><path d="M2 9h8v9H2z" fill="#dcdcdc" stroke="none" /></Icon>
          <span className="ml-1.5 h-[17px] w-2.5 rounded-full border border-[#404040] bg-[#454545]"><span className="block h-2 w-2 rounded-full bg-[#dcdcdc]" /></span>
        </div>
      </div>
      <div className="flex h-[29px] shrink-0 items-center border-b border-[#404040] bg-[#535353] pt-0.5 pl-[3px]">
        <div className="relative mr-1.5">
          <select aria-label="混合模式" className="block h-[22px] w-[118px] appearance-none rounded-sm border border-[#666] bg-[#454545] pl-2 text-[#eee]">
            <option>正常</option>
          </select>
          <Chevron className="pointer-events-none absolute top-2 right-1" />
        </div>
        <label htmlFor="不透明度" className="mr-1 w-[53px] whitespace-nowrap">不透明度:</label>
        <Combo id="不透明度" value="100%" width="w-[55px]" />
      </div>
      <div className="flex h-[31px] shrink-0 items-center bg-[#535353] pb-0.5 pl-[7px]">
        <span className="w-9 whitespace-nowrap">锁定:</span>
        <div className="flex w-[109px] items-center gap-[9px]">
          <svg viewBox="0 0 12 12" className="h-3 w-3"><path d="M.5.5h11v11H.5z" fill="#888" stroke="#aaa" /><path d="M1 1h3v3H1zM8 1h3v3H8zM4 4h4v4H4zM1 8h3v3H1zM8 8h3v3H8z" fill="#4a4a4a" /></svg>
          <span className="opacity-60"><BrushIcon size="h-3.5 w-3.5" /></span>
          <MoveIcon size="h-4 w-4" />
          <Icon size="h-3.5 w-3.5"><path d="M4 1v15h15M1 4h11l4 4v11M12 4v4h4" strokeWidth="1.600" /></Icon>
          <LockIcon />
        </div>
        <label htmlFor="填充不透明度" className="w-8 whitespace-nowrap">填充:</label>
        <Combo id="填充不透明度" value="100%" width="w-[55px]" />
      </div>
      <div className="relative flex h-9 shrink-0 items-center border-b border-[#777] bg-[#6a6a6a] pt-px">
        <button aria-label="显示 矩形 1" className="flex h-full w-[30px] items-center justify-center border-r border-[#4a4a4a] bg-[#535353]"><Eye /></button>
        <svg viewBox="0 0 36 30" className="ml-0.5 h-[30px] w-9">
          <path d="M.5 10V.5H12M24 .5h11.500V10M35.500 20v9.500H24M12 29.500H.5V20" fill="none" stroke="#fff" />
          <path d="M2.500 2.500h31v25h-31z" fill="#fff" stroke="#333" />
          <path d="M5 17h10v6H5z" fill="#5f90cc" /><path d="M6 19h8v1.500H6z" fill="#f00062" /><path d="M6 20.500h8V22H6z" fill="#1f00a6" />
          <path d="M19 14.500h14.500v14H19z" fill="#535353" stroke="#333" />
          <path d="M22.500 18h8v8h-8z" fill="none" stroke="#ddd" /><path d="M21.500 17h2v2h-2zM29.500 17h2v2h-2zM21.500 25h2v2h-2zM29.500 25h2v2h-2z" fill="#535353" stroke="#ddd" />
        </svg>
        <span className="ml-[7px] whitespace-pre text-[#eee]">矩形  1</span>
        <RedBox className="-inset-y-px -left-px w-[184px]" />
      </div>
      <div className="flex h-[37px] shrink-0 items-center border-b border-[#404040] bg-[#535353]">
        <button aria-label="显示 背景" className="flex h-full w-[30px] shrink-0 items-center justify-center border-r border-[#454545]"><Eye /></button>
        <span className="ml-1 h-7 w-8 shrink-0 border border-[#333] bg-[linear-gradient(to_bottom,#7cda12_28%,#bd7a88_50%,#ff17f8_78%)]" />
        <span className="mr-auto ml-[9px] text-[#eee]">背景</span>
        <span className="-mr-1.5"><OutlineLockIcon /></span>
      </div>
    </section>
  )
}

function Arrow({ from, to }: { from: [number, number]; to: [number, number] }) {
  const dx = from[0] - to[0]
  const dy = from[1] - to[1]
  const len = Math.hypot(dx, dy)
  const at = (along: number, side: number) =>
    `${to[0] + (dx * along - dy * side) / len},${to[1] + (dy * along + dx * side) / len}`

  return <polygon points={[at(0, 0), at(14, 7), at(11, 2.5), at(len, 0), at(11, -2.5), at(14, -7)].join(" ")} />
}

function Annotations() {
  return (
    <div className="pointer-events-none absolute inset-0 z-20 overflow-hidden font-['Noto_Sans_CJK_SC',sans-serif] text-[21px] leading-7 text-[#ff1f10]">
      <svg className="absolute inset-0 h-full w-full" fill="#ff1f10">
        <Arrow from={[582, 363]} to={[278, 26]} />
        <Arrow from={[562, 411]} to={[66, 505]} />
        <Arrow from={[1252, 460]} to={[1537, 732]} />
      </svg>
      <p className="absolute top-[362px] left-[608px] whitespace-nowrap">
        原色颜色填充背景前景色之外的其他颜色可以从填充处修改，填充处进入方式：
        <br />
        选中矩形工具，选择路径选择，此处会显示填充以及描边工具栏
      </p>
      <p className="absolute top-[510px] left-[578px] whitespace-nowrap">描边的作用是将矩形周边按照指定颜色执行大小以及形状进行处理</p>
    </div>
  )
}

export default function App() {
  return (
    <div className="relative flex h-screen flex-col overflow-hidden bg-[#424242] font-['Noto_Sans','Noto_Sans_CJK_SC',sans-serif] text-[#dcdcdc]">
      <OptionsBar />
      <div className="flex min-h-0 flex-1">
        <Toolbar />
        <Workspace />
        <div className="flex shrink-0 flex-col border-l-2 border-[#3a3a3a] bg-[#535353]">
          <div className="flex h-3 shrink-0 items-center border-b border-[#383838] bg-[#424242] pl-[85px]">
            <svg viewBox="0 0 8 6" className="h-1.5 w-2" fill="none" stroke="#ddd" strokeWidth="1.2">
              <path d="M3.500 .5L1 3L3.500 5.500M7 .5L4.500 3L7 5.500" />
            </svg>
          </div>
          <div className="flex min-h-0 flex-1">
            <Dock />
            <div className="flex w-[297px] flex-col">
              <ColorPanel />
              <PropertiesPanel />
              <LayersPanel />
            </div>
          </div>
        </div>
      </div>
      <StrokeOptions />
      <Annotations />
    </div>
  )
}
